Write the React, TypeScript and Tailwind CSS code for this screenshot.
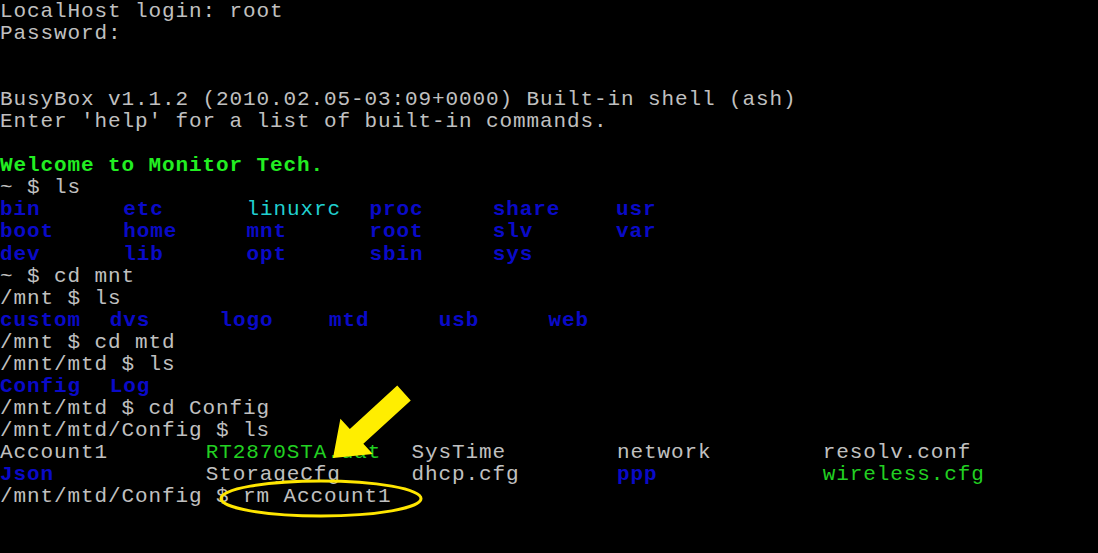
const W = "text-[#c0c0c0]";
const B = "text-[#0a0ac8] font-bold";
const C = "text-[#20d0d0]";
const G = "text-[#22d022]";

type Cell = [string, string];

function Row({ cells, col }: { cells: Cell[]; col: string }) {
	return (
		<div className="flex h-[22.05px]">
			{cells.map(([t, c], i) => (
				<span key={i} className={`${col} shrink-0 whitespace-pre ${c}`}>
					{t}
				</span>
			))}
		</div>
	);
}

function Line({ children, className = W }: { children?: React.ReactNode; className?: string }) {
	return <div className={`whitespace-pre h-[22.05px] ${className}`}>{children ?? " "}</div>;
}

export default function App() {
	return (
		<div className="relative w-[1098px] h-[553px] bg-black overflow-hidden">
			<div
				className="pt-[1px] text-[21px] tracking-[0.9px] leading-[22.05px]"
				style={{ fontFamily: '"Liberation Mono", monospace' }}>
				<Line>LocalHost login: root</Line>
				<Line>Password:</Line>
				<Line />
				<Line />
				<Line>BusyBox v1.1.2 (2010.02.05-03:09+0000) Built-in shell (ash)</Line>
				<Line>Enter 'help' for a list of built-in commands.</Line>
				<Line />
				<Line className="text-[#22ee22] font-bold">Welcome to Monitor Tech.</Line>
				<Line>~ $ ls</Line>
				<Row col="w-[123.2px]" cells={[["bin", B], ["etc", B], ["linuxrc", C], ["proc", B], ["share", B], ["usr", B]]} />
				<Row col="w-[123.2px]" cells={[["boot", B], ["home", B], ["mnt", B], ["root", B], ["slv", B], ["var", B]]} />
				<Row col="w-[123.2px]" cells={[["dev", B], ["lib", B], ["opt", B], ["sbin", B], ["sys", B]]} />
				<Line>~ $ cd mnt</Line>
				<Line>/mnt $ ls</Line>
				<Row col="w-[109.7px]" cells={[["custom", B], ["dvs", B], ["logo", B], ["mtd", B], ["usb", B], ["web", B]]} />
				<Line>/mnt $ cd mtd</Line>
				<Line>/mnt/mtd $ ls</Line>
				<Row col="w-[109.7px]" cells={[["Config", B], ["Log", B]]} />
				<Line>/mnt/mtd $ cd Config</Line>
				<Line>/mnt/mtd/Config $ ls</Line>
				<Row col="w-[205.7px]" cells={[["Account1", W], ["RT2870STA.dat", G], ["SysTime", W], ["network", W], ["resolv.conf", W]]} />
				<Row col="w-[205.7px]" cells={[["Json", B], ["StorageCfg", W], ["dhcp.cfg", W], ["ppp", B], ["wireless.cfg", G]]} />
				<Line>/mnt/mtd/Config $ rm Account1</Line>
			</div>

			{/* annotation overlay */}
			<svg className="absolute inset-0" width="1098" height="553" viewBox="0 0 1098 553">
				<polygon
					points="397.25,385.6 410.75,400.4 363.35,443.8 372.8,454.1 333,458 340.4,418.7 349.85,429"
					fill="#ffee00"
				/>
				<ellipse cx="321" cy="498.5" rx="100" ry="17.5" fill="none" stroke="#ffe600" strokeWidth="3" />
			</svg>
		</div>
	);
}
